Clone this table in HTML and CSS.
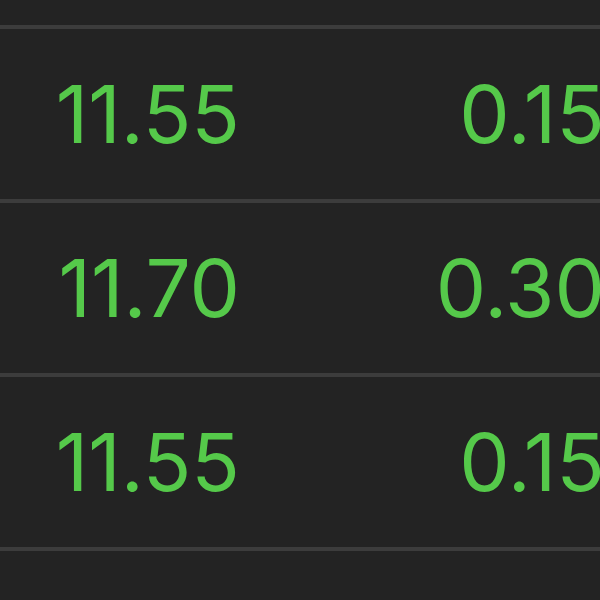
FILE: index.html
```html
<!DOCTYPE html>
<html lang="en">
<head>
  <meta charset="UTF-8">
  <meta name="viewport" content="width=device-width, initial-scale=1.0">
  <title>Quotes</title>
  <link rel="stylesheet" href="styles.css">
</head>
<body>
  <div class="table">
    <div class="row row-top"></div>
    <div class="row">
      <span class="cell price">11.55</span>
      <span class="cell change">0.15</span>
    </div>
    <div class="row">
      <span class="cell price">11.70</span>
      <span class="cell change">0.30</span>
    </div>
    <div class="row">
      <span class="cell price">11.55</span>
      <span class="cell change">0.15</span>
    </div>
    <div class="row"></div>
  </div>
</body>
</html>
```

FILE: styles.css
```css
body {
  margin: 0;
  padding: 0;
  background: #232323;
  font-family: 'Inter', 'Helvetica', sans-serif;
  overflow: hidden;
}
.table {
  width: 700px;
}
.row {
  display: grid;
  grid-template-columns: 240px 365px;
  align-items: center;
  height: 170px;
  border-top: 4px solid #3c3c3c;
}
.row-top {
  height: 25px;
  border-top: none;
}
.cell {
  font-size: 80px;
  font-weight: 400;
  color: #55c94a;
  text-align: right;
  line-height: 1;
}
```
